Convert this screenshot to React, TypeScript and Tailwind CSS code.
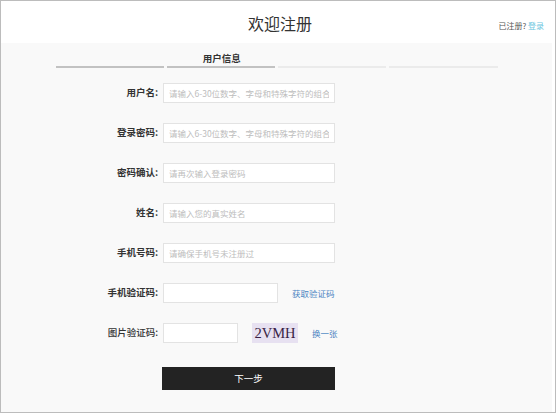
import React from 'react';

interface FieldProps {
  label: string;
  placeholder?: string;
  inputWidth?: string;
  children?: React.ReactNode;
  boldLabel?: boolean;
}

const Field: React.FC<FieldProps> = ({ label, placeholder, inputWidth = 'w-[172px]', children, boldLabel = true }) => (
  <div className="flex items-center h-[20px]">
    <label
      className={`w-[98px] text-right text-[9.5px] text-[#333] leading-none ${boldLabel ? 'font-bold' : 'font-medium'}`}
    >
      {label}
    </label>
    <input
      type="text"
      placeholder={placeholder}
      className={`${inputWidth} ml-[5px] h-[20px] border border-[#e3e3e3] bg-white px-[5px] text-[8.5px] text-[#333] outline-none placeholder:text-[#bdbdbd]`}
    />
    {children}
  </div>
);

const steps = ['', '用户信息', '', ''];

export default function App() {
  return (
    <div className="w-[556px] h-[413px] border border-[#bcbcbc] bg-white pr-[3px] flex flex-col font-['Noto_Sans_CJK_SC','Microsoft_YaHei',sans-serif]">
      <header className="h-[42px] grid grid-cols-[1fr_auto_1fr] items-center">
        <div />
        <h1 className="text-[16px] text-[#333] leading-none pt-[1px] pl-[7px]">欢迎注册</h1>
        <div className="flex justify-end pr-[8px] pt-[8px] text-[8px] text-[#555]">
          已注册?&nbsp;<a className="text-[#6ec6e0]">登录</a>
        </div>
      </header>

      <main className="flex-1 bg-[#f9f9f9]">
        <div className="mx-auto w-[442px] pt-[8px] grid grid-cols-4 gap-x-[3px]">
          {steps.map((s, i) => (
            <div key={i} className="flex flex-col">
              <div className="h-[14px] text-center text-[9.5px] font-semibold text-[#333] leading-[14px] pl-[2px]">
                {s}
              </div>
              <div className={`mt-[1px] h-[2px] ${i < 2 ? 'bg-[#c2c2c2]' : 'bg-[#ebebeb]'}`} />
            </div>
          ))}
        </div>

        <form className="mt-[15px] pl-[59px] flex flex-col gap-y-[20px]">
          <Field label="用户名:" placeholder="请输入6-30位数字、字母和特殊字符的组合" />
          <Field label="登录密码:" placeholder="请输入6-30位数字、字母和特殊字符的组合" />
          <Field label="密码确认:" placeholder="请再次输入登录密码" />
          <Field label="姓名:" placeholder="请输入您的真实姓名" />
          <Field label="手机号码:" placeholder="请确保手机号未注册过" />
          <Field label="手机验证码:" inputWidth="w-[115px]">
            <a className="ml-[14px] text-[8.5px] text-[#4a84c2]">获取验证码</a>
          </Field>
          <Field label="图片验证码:" inputWidth="w-[75px]" boldLabel={false}>
            <div className="ml-[14px] w-[46px] h-[20px] bg-[#e7e1f1] flex items-center justify-center font-['Liberation_Serif',serif] text-[14.5px] text-[#3a1f46] leading-none">
              2VMH
            </div>
            <a className="ml-[14px] text-[8.5px] text-[#4a84c2]">换一张</a>
          </Field>
          <div className="pl-[102px]">
            <button
              type="button"
              className="w-[173px] h-[23px] bg-[#232323] text-white text-[9.5px] leading-none"
            >
              下一步
            </button>
          </div>
        </form>
      </main>
    </div>
  );
}
